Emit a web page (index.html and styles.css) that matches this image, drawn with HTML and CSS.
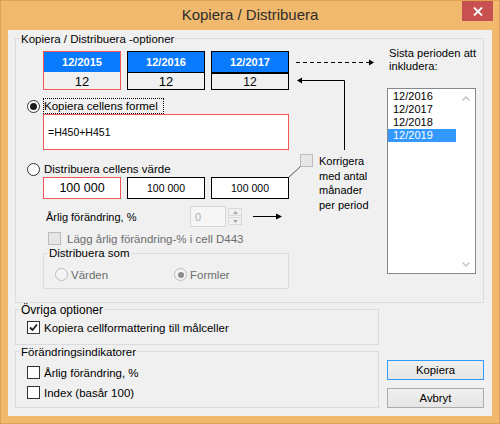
FILE: index.html
```html
<!DOCTYPE html>
<html>
<head>
<meta charset="utf-8">
<title>Kopiera / Distribuera</title>
<link rel="stylesheet" href="styles.css">
</head>
<body>
<div class="window">
  <div class="titlebar">
    <div class="title">Kopiera / Distribuera</div>
    <div class="close"><svg width="10" height="9" viewBox="0 0 10 9"><path d="M1 0.5 L9 8.5 M9 0.5 L1 8.5" stroke="#fff" stroke-width="1.8"/></svg></div>
  </div>
  <div class="client">
    <div class="group main">
      <div class="legend">Kopiera / Distribuera -optioner</div>
      <div class="main-grid">
        <div class="left">
          <div class="tiles">
            <div class="tile sel"><div class="tile-h">12/2015</div><div class="tile-v">12</div></div>
            <div class="tile"><div class="tile-h">12/2016</div><div class="tile-v">12</div></div>
            <div class="tile last"><div class="tile-h">12/2017</div><div class="tile-v">12</div></div>
          </div>
          <div class="opt opt1"><span class="radio checked"></span><span class="focus">Kopiera cellens formel</span></div>
          <div class="formula">=H450+H451</div>
          <div class="opt opt2"><span class="radio"></span><span>Distribuera cellens värde</span></div>
          <div class="values">
            <div class="val sel">100 000</div>
            <div class="val">100 000</div>
            <div class="val">100 000</div>
          </div>
          <div class="annual">
            <span class="lbl">Årlig förändring, %</span>
            <div class="spin-input">0</div>
            <div class="spin-btns">
              <span class="spin-b"><svg width="5" height="3" viewBox="0 0 5 3"><path d="M0 3 L2.5 0 L5 3 Z" fill="#a8a8a8"/></svg></span>
              <span class="spin-b"><svg width="5" height="3" viewBox="0 0 5 3"><path d="M0 0 L2.5 3 L5 0 Z" fill="#a8a8a8"/></svg></span>
            </div>
            <svg class="arrow-right" width="29" height="7" viewBox="0 0 29 7"><path d="M0 3.5 H24" stroke="#000" stroke-width="1"/><path d="M23 0.5 L29 3.5 L23 6.5 Z" fill="#000"/></svg>
          </div>
          <div class="chk-row lagg"><span class="check dis"></span><span>Lägg årlig förändring-% i cell D443</span></div>
          <div class="group sub">
            <div class="legend">Distribuera som</div>
            <div class="sub-radios">
              <div class="opt dis"><span class="radio dis"></span><span>Värden</span></div>
              <div class="opt dis"><span class="radio dis checked"></span><span>Formler</span></div>
            </div>
          </div>
        </div>
        <div class="middle">
          <div class="korr">
            <span class="check dis"></span>
            <div class="korr-text">Korrigera<br>med antal<br>månader<br>per period</div>
          </div>
        </div>
        <div class="right">
          <div class="sista">Sista perioden att<br>inkludera:</div>
          <div class="listbox">
            <div class="items">
              <div class="item">12/2016</div>
              <div class="item">12/2017</div>
              <div class="item">12/2018</div>
              <div class="item sel">12/2019</div>
            </div>
            <div class="scroll">
              <svg width="8" height="5" viewBox="0 0 8 5"><path d="M0.5 4.5 L4 1 L7.5 4.5" stroke="#c4c4c4" stroke-width="1.5" fill="none"/></svg>
              <svg width="8" height="5" viewBox="0 0 8 5"><path d="M0.5 0.5 L4 4 L7.5 0.5" stroke="#c4c4c4" stroke-width="1.5" fill="none"/></svg>
            </div>
          </div>
        </div>
      </div>
      <svg class="connectors" width="467" height="200" viewBox="0 0 467 200">
        <path d="M280 23.5 H354" stroke="#000" stroke-width="1" stroke-dasharray="4 3" fill="none"/>
        <path d="M353 20.5 L358 23.5 L353 26.5 Z" fill="#000"/>
        <path d="M285 41.5 H328.5 V111" stroke="#000" stroke-width="1" fill="none"/>
        <path d="M286 38.5 L281 41.5 L286 44.5 Z" fill="#000"/>
        <path d="M284.5 127.5 L273 138" stroke="#555" stroke-width="1" fill="none"/>
      </svg>
    </div>
    <div class="bottom">
      <div class="bottom-groups">
        <div class="group ovriga">
          <div class="legend big">Övriga optioner</div>
          <div class="chk-row r-first"><span class="check checked"><svg width="11" height="11" viewBox="0 0 11 11"><path d="M2 5.5 L4.5 8 L9 2.5" stroke="#1e1e1e" stroke-width="1.8" fill="none"/></svg></span><span>Kopiera cellformattering till målceller</span></div>
        </div>
        <div class="group forand">
          <div class="legend">Förändringsindikatorer</div>
          <div class="chk-row r-first2"><span class="check"></span><span>Årlig förändring, %</span></div>
          <div class="chk-row r-second"><span class="check"></span><span>Index (basår 100)</span></div>
        </div>
      </div>
      <div class="buttons">
        <div class="btn default">Kopiera</div>
        <div class="btn">Avbryt</div>
      </div>
    </div>
  </div>
</div>
</body>
</html>
```
FILE: styles.css
```css
* { box-sizing: border-box; }
html, body { margin: 0; padding: 0; }
body {
  font-family: "Liberation Sans", Arial, sans-serif;
  font-size: 11.5px;
  color: #000;
  background: #f1b96d;
}
.window {
  width: 500px;
  height: 424px;
  background: #f1b96d;
  border: 1px solid #e0a154;
  display: flex;
  flex-direction: column;
}
.titlebar {
  height: 29px;
  display: grid;
  grid-template-columns: 1fr auto 1fr;
  align-items: start;
}
.title {
  grid-column: 2;
  font-size: 15px;
  line-height: 28px;
  color: #2e2e2e;
}
.close {
  grid-column: 3;
  justify-self: end;
  margin-right: 6px;
  width: 31px;
  height: 20px;
  background: #c75050;
  display: flex;
  align-items: center;
  justify-content: center;
}
.client {
  flex: 1;
  margin: 0 7px 7px;
  background: #f0f0f0;
  padding: 8px 8px 8px 7px;
  display: flex;
  flex-direction: column;
}
.group {
  border: 1px solid #dcdcdc;
  position: relative;
}
.legend {
  width: fit-content;
  background: #f0f0f0;
  padding: 0 1px;
  height: 14px;
  line-height: 14px;
  white-space: nowrap;
}
.legend.big { font-size: 12px; }

/* main group */
.main {
  height: 265px;
  padding: 0 7px 0 11px;
}
.main > .legend { margin: -7px 0 0 -7px; }
.main-grid {
  display: grid;
  grid-template-columns: 262px 98px 89px;
}
.tiles {
  display: flex;
  gap: 6px;
  margin: 5px 0 0 16px;
}
.tile {
  width: 78px;
  height: 39px;
  border: 1px solid #000;
  display: flex;
  flex-direction: column;
}
.tile.sel { border-color: #f05858; }
.tile-h {
  height: 21px;
  background: #0a7bff;
  color: #fff;
  font-weight: bold;
  font-size: 11px;
  display: flex;
  align-items: center;
  justify-content: center;
  border-bottom: 1px solid #000;
}
.tile.sel .tile-h { border-bottom: 0; height: 20px; }
.tile.last .tile-h { border-bottom-width: 2px; height: 22px; }
.tile-v {
  flex: 1;
  display: flex;
  align-items: center;
  justify-content: center;
  font-size: 13px;
  padding-top: 1px;
}
.tile.last .tile-v { font-size: 12px; padding-top: 0; }

.opt {
  display: flex;
  align-items: center;
  height: 16px;
  gap: 4px;
}
.opt1 { margin-top: 8px; gap: 3px; }
.opt2 { margin-top: 11px; }
.focus {
  border: 1px dotted #000;
  padding: 0 5px 0 0;
  line-height: 14px;
}
.radio {
  width: 13px;
  height: 13px;
  border-radius: 50%;
  border: 1px solid #333;
  background: #fff;
  display: flex;
  align-items: center;
  justify-content: center;
  flex: none;
}
.radio.checked::after {
  content: "";
  width: 7px;
  height: 7px;
  border-radius: 50%;
  background: #1c1c1c;
}
.radio.dis { border-color: #bcbcbc; background: #f4f4f4; }
.radio.dis.checked::after { background: #8d8d8d; width: 6px; height: 6px; }
.opt.dis { color: #6d6d6d; gap: 3px; }

.formula {
  margin-left: 16px;
  width: 246px;
  height: 36px;
  border: 1px solid #f05858;
  background: #fff;
  display: flex;
  align-items: center;
  padding-left: 4px;
  font-size: 10.5px;
}
.values {
  display: flex;
  gap: 6px;
  margin-left: 16px;
}
.val {
  width: 78px;
  height: 22px;
  border: 1px solid #000;
  background: #fff;
  display: flex;
  align-items: center;
  justify-content: center;
  font-size: 10.5px;
}
.val.sel { border-color: #f05858; font-size: 12.5px; }

.annual {
  display: flex;
  align-items: center;
  height: 21px;
  margin-top: 7px;
}
.annual .lbl { width: 144px; margin-left: 19px; font-size: 11px; }
.spin-input {
  width: 36px;
  height: 21px;
  border: 1px solid #d6d6d6;
  background: #f6f6f6;
  color: #adadad;
  padding-left: 4px;
  display: flex;
  align-items: center;
  font-size: 11px;
}
.spin-btns {
  margin-left: 2px;
  width: 14px;
  display: flex;
  flex-direction: column;
  gap: 1px;
}
.spin-b {
  height: 8px;
  border: 1px solid #dadada;
  background: #f0f0f0;
  display: flex;
  align-items: center;
  justify-content: center;
}
.arrow-right { margin-left: 11px; display: block; }

.chk-row {
  display: flex;
  align-items: center;
  height: 15px;
  gap: 4px;
}
.check {
  width: 13px;
  height: 13px;
  border: 1px solid #333;
  background: #fff;
  flex: none;
  display: flex;
  align-items: center;
  justify-content: center;
}
.check.dis { border-color: #bcbcbc; background: #e6e6e6; }
.lagg { margin: 4px 0 0 21px; color: #6d6d6d; gap: 6px; }

.sub {
  margin: 7px 0 0 16px;
  width: 246px;
  height: 36px;
  padding-left: 11px;
}
.sub > .legend { margin: -8px 0 0 -7px; }
.sub-radios {
  display: grid;
  grid-template-columns: 119px auto;
  margin-top: 7px;
}
.sub-radios .opt { height: 15px; }

.korr {
  display: flex;
  align-items: flex-start;
  gap: 6px;
  margin: 108px 0 0 11px;
}
.korr-text { font-size: 11px; line-height: 14.5px; }

.sista {
  margin: 1px 0 0 2px;
  line-height: 13px;
  font-size: 11.2px;
  white-space: nowrap;
}
.listbox {
  margin-top: 15px;
  width: 89px;
  height: 186px;
  border: 1px solid #828790;
  background: #fff;
  display: flex;
}
.items { width: 68px; padding-top: 1px; }
.item {
  height: 13px;
  line-height: 13px;
  padding-left: 5px;
  font-size: 11px;
}
.item.sel { background: #3399ff; color: #fff; }
.scroll {
  flex: 1;
  display: flex;
  flex-direction: column;
  justify-content: space-between;
  align-items: center;
  padding: 7px 0 6px;
}

.connectors {
  position: absolute;
  left: 0;
  top: 0;
  pointer-events: none;
}

/* bottom */
.bottom {
  display: flex;
  gap: 8px;
  margin-top: 6px;
}
.bottom-groups {
  width: 364px;
  display: flex;
  flex-direction: column;
  gap: 6px;
}
.ovriga { height: 36px; padding-left: 11px; }
.forand { height: 57px; padding-left: 11px; }
.ovriga > .legend, .forand > .legend { margin: -7px 0 0 -7px; }
.r-first { margin-top: 3px; }
.r-first2 { margin-top: 6px; }
.r-second { margin-top: 5px; }
.buttons {
  width: 97px;
  display: flex;
  flex-direction: column;
  justify-content: flex-end;
  gap: 8px;
}
.btn {
  height: 20px;
  border: 1px solid #acacac;
  background: linear-gradient(#f0f0f0, #e5e5e5);
  display: flex;
  align-items: center;
  justify-content: center;
  font-size: 11.3px;
}
.btn.default { border-color: #3399ff; }
```
